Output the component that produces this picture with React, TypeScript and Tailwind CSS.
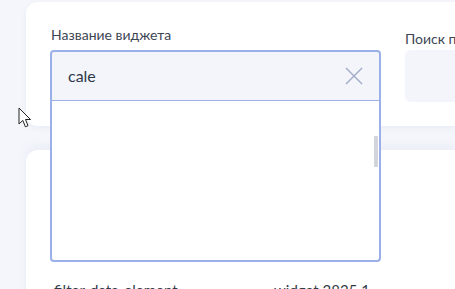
import React from "react";

// ─── Cursor ───────────────────────────────────────────────────────────────
function Pointer() {
  return (
    <svg width="14" height="22" viewBox="0 0 14 22" className="absolute left-[18px] top-[107px]">
      <path d="M1 1 L1 17 L4.8 13.4 L7.4 19.8 L10 18.7 L7.5 12.5 L12.5 12.5 Z" fill="#fff" stroke="#222" strokeWidth="1" strokeLinejoin="miter" />
    </svg>
  );
}

// ─── Combobox with open list ──────────────────────────────────────────────
function WidgetCombo() {
  return (
    <div className="relative w-[331px]">
      <div className="h-[52px] flex items-center justify-between bg-[#f4f5fa] border-2 border-[#9bb0e8] rounded-t-[4px] pl-[16px] pr-[16px]">
        <span className="text-[16px] text-[#2e3848] leading-none">cale</span>
        <svg width="18" height="18" viewBox="0 0 18 18">
          <path d="M1 1 L17 17 M17 1 L1 17" stroke="#a4aecb" strokeWidth="1.5" />
        </svg>
      </div>
      <div className="absolute left-0 top-[51px] w-[331px] h-[161px] bg-white border-2 border-t-0 border-[#9bb0e8] rounded-b-[4px] z-10">
        <div className="absolute right-[1px] top-[35px] w-[4px] h-[31px] bg-[#d2d5db] rounded-[1px]" />
      </div>
    </div>
  );
}

export default function App() {
  return (
    <div className="relative w-[455px] h-[289px] overflow-hidden bg-[#f4f6fb] font-['Lato',sans-serif]">
      <div className="ml-[26px] mt-[2px] h-[124px] bg-white rounded-l-[12px] pl-[24px] pt-[24px] flex gap-[24px] shadow-[0_2px_6px_rgba(180,190,220,0.15)]">
        <div className="flex flex-col">
          <span className="text-[14px] leading-[18px] text-[#3d4654] pl-[1px] mb-[6px]">Название виджета</span>
          <WidgetCombo />
        </div>
        <div className="flex flex-col pt-[4px] flex-1">
          <span className="text-[14px] leading-[18px] text-[#3d4654] whitespace-nowrap mb-[2px]">Поиск по ID</span>
          <div className="h-[52px] bg-[#f4f5fa] rounded-l-[6px]" />
        </div>
      </div>

      <div className="ml-[26px] mt-[24px] h-[200px] bg-white rounded-l-[12px] pl-[28px] pt-[130px] flex shadow-[0_-4px_10px_rgba(180,190,220,0.15)]">
        <span className="w-[220px] text-[15px] text-[#333b47] leading-[20px]">filter-data-element</span>
        <span className="text-[15px] text-[#333b47] leading-[20px]">widget 2835 1</span>
      </div>

      <Pointer />
    </div>
  );
}
